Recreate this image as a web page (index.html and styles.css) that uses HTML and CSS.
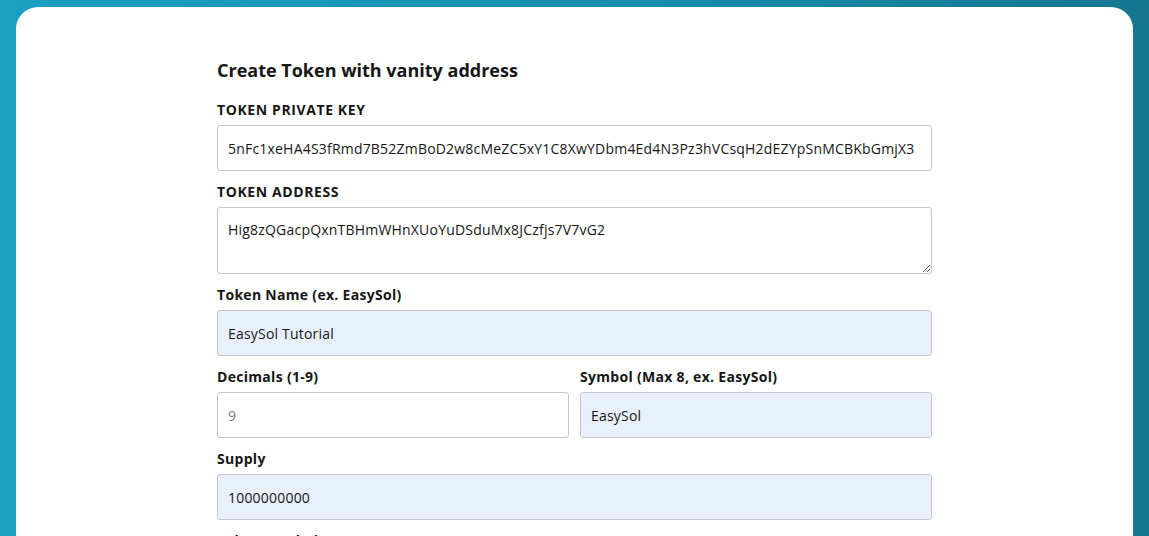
FILE: index.html
```html
<!DOCTYPE html>
<html lang="en">
<head>
<meta charset="utf-8">
<title>Create Token with vanity address</title>
<link rel="stylesheet" href="styles.css">
</head>
<body>
<main class="card">
  <form class="form">
    <h1 class="title">Create Token with vanity address</h1>
    <div class="field">
      <label class="label caps">TOKEN PRIVATE KEY</label>
      <input class="input" type="text" value="5nFc1xeHA4S3fRmd7B52ZmBoD2w8cMeZC5xY1C8XwYDbm4Ed4N3Pz3hVCsqH2dEZYpSnMCBKbGmjX3">
    </div>
    <div class="field">
      <label class="label caps">TOKEN ADDRESS</label>
      <textarea class="input textarea">Hig8zQGacpQxnTBHmWHnXUoYuDSduMx8JCzfjs7V7vG2</textarea>
    </div>
    <div class="field">
      <label class="label">Token Name (ex. EasySol)</label>
      <input class="input filled" type="text" value="EasySol Tutorial">
    </div>
    <div class="row">
      <div class="field">
        <label class="label">Decimals (1-9)</label>
        <input class="input" type="text" placeholder="9">
      </div>
      <div class="field">
        <label class="label">Symbol (Max 8, ex. EasySol)</label>
        <input class="input filled" type="text" value="EasySol">
      </div>
    </div>
    <div class="field">
      <label class="label">Supply</label>
      <input class="input filled" type="text" value="1000000000">
    </div>
    <div class="field">
      <label class="label">Token Symbol Image</label>
    </div>
  </form>
</main>
</body>
</html>
```
FILE: styles.css
```css
html, body {
  margin: 0;
  padding: 0;
  height: 100%;
  overflow: hidden;
}
body {
  background: linear-gradient(90deg, #1aa0c3 0%, #1890b0 50%, #167690 100%);
  font-family: "Open Sans", Lato, sans-serif;
  color: #161616;
}
.card {
  margin: 7px 16px 0;
  background: #fff;
  border-radius: 22px 22px 0 0;
  padding-top: 51px;
  min-height: 600px;
}
.form {
  width: 715px;
  margin: 0 auto;
}
.title {
  margin: 0 0 18px;
  font-size: 18px;
  line-height: 24px;
  font-weight: 700;
}
.field {
  margin-bottom: 11px;
}
.label {
  display: block;
  font-size: 14px;
  line-height: 20px;
  font-weight: 700;
  margin-bottom: 5px;
  letter-spacing: 0.3px;
}
.caps {
  letter-spacing: 0.6px;
}
.input {
  display: block;
  box-sizing: border-box;
  width: 100%;
  height: 46px;
  padding: 0 10px;
  border: 1px solid #c6c6c6;
  border-radius: 3px;
  background: #fff;
  font-family: inherit;
  font-size: 14px;
  letter-spacing: 0.2px;
  color: #161616;
  outline: none;
}
.input::placeholder {
  color: #7a7a7a;
}
.filled {
  background: #e8f0fe;
}
.textarea {
  height: 67px;
  padding: 12px 10px;
  line-height: 20px;
  resize: vertical;
}
.row {
  display: grid;
  grid-template-columns: 1fr 1fr;
  column-gap: 11px;
}
```
